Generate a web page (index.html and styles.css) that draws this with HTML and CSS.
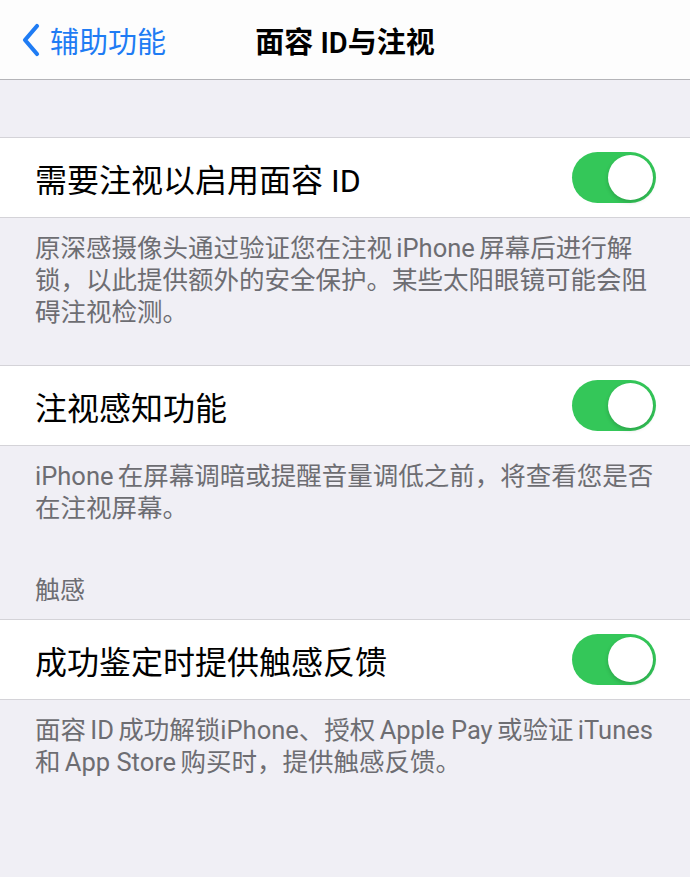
FILE: index.html
```html
<!DOCTYPE html>
<html lang="zh-CN">

<head>
    <meta charset="UTF-8">
    <meta name="viewport" content="width=device-width, initial-scale=1.0">
    <title>面容 ID与注视</title>
    <link rel="stylesheet" href="styles.css">
</head>

<body>
    <!-- Navigation bar -->
    <div class="navbar">
        <a class="back" href="#">
            <svg class="chevron" width="22" height="34" viewBox="0 0 22 34">
                <path d="M17 3 L5 17 L17 31" fill="none" stroke="#1f7cf4" stroke-width="4.2" stroke-linecap="round" stroke-linejoin="round" />
            </svg>
            <span>辅助功能</span>
        </a>
        <div class="nav-title">面容 ID与注视</div>
        <div></div>
    </div>

    <div class="spacer"></div>

    <!-- Attention required -->
    <div class="group">
        <div class="cell">
            <span class="cell-label">需要注视以启用面容 ID</span>
            <span class="switch on"><span class="knob"></span></span>
        </div>
        <p class="footer">原深感摄像头通过验证您在注视&#8198;iPhone&#8198;屏幕后进行解锁，以此提供额外的安全保护。某些太阳眼镜可能会阻碍注视检测。</p>
    </div>

    <!-- Attention aware -->
    <div class="group second">
        <div class="cell">
            <span class="cell-label">注视感知功能</span>
            <span class="switch on"><span class="knob"></span></span>
        </div>
        <p class="footer">iPhone&#8198;在屏幕调暗或提醒音量调低之前，将查看您是否在注视屏幕。</p>
    </div>

    <!-- Haptics -->
    <div class="group third">
        <div class="header">触感</div>
        <div class="cell">
            <span class="cell-label">成功鉴定时提供触感反馈</span>
            <span class="switch on"><span class="knob"></span></span>
        </div>
        <p class="footer">面容&#8198;ID&#8198;成功解锁iPhone、授权&#8198;Apple Pay&#8198;或验证&#8198;iTunes 和&#8198;App Store&#8198;购买时，提供触感反馈。</p>
    </div>
</body>

</html>
```

FILE: styles.css
```css
body {
    margin: 0;
    background: #f0eff5;
    font-family: Roboto, "Noto Sans CJK SC", sans-serif;
    color: #000;
}

.navbar {
    height: 79px;
    background: #fdfdfd;
    border-bottom: 1px solid #b4b4b8;
    display: grid;
    grid-template-columns: 1fr auto 1fr;
    align-items: center;
}

.back {
    display: flex;
    align-items: center;
    gap: 8px;
    padding-left: 20px;
    color: #1f7cf4;
    font-size: 29px;
    text-decoration: none;
}

.nav-title {
    font-size: 29px;
    font-weight: 600;
}

.spacer {
    height: 57px;
}

.cell {
    height: 79px;
    background: #fff;
    border-top: 1px solid #d4d3d8;
    border-bottom: 1px solid #d4d3d8;
    display: flex;
    align-items: center;
    justify-content: space-between;
    padding: 0 34px 0 35px;
}

.cell-label {
    font-size: 32px;
}

.switch {
    width: 84px;
    height: 51px;
    border-radius: 26px;
    background: #e5e5ea;
    display: flex;
    align-items: center;
    padding: 3px;
    box-sizing: border-box;
}

.switch.on {
    background: #34c759;
    justify-content: flex-end;
}

.knob {
    width: 45px;
    height: 45px;
    border-radius: 50%;
    background: #fff;
    box-shadow: 0 2px 4px rgba(0, 0, 0, 0.18);
}

.footer {
    margin: 0;
    padding: 14px 28px 0 35px;
    font-size: 25.5px;
    line-height: 32px;
    color: #6d6d72;
}

.group.second {
    margin-top: 37px;
}

.group.third {
    margin-top: 51px;
}

.header {
    padding: 0 35px 12px;
    font-size: 25px;
    line-height: 32px;
    color: #6d6d72;
}
```
